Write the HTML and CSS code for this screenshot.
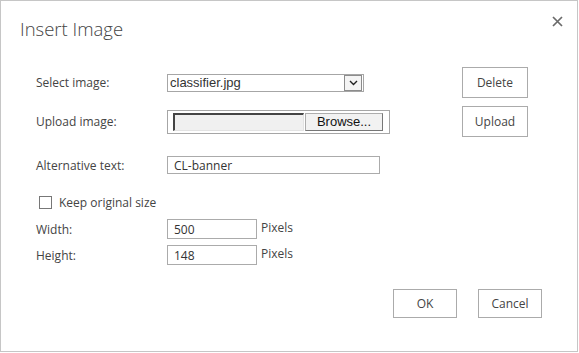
FILE: index.html
```html
<!DOCTYPE html>
<html lang="en">
<head>
  <meta charset="UTF-8">
  <title>Insert Image</title>
  <link rel="stylesheet" href="styles.css">
</head>
<body>
  <div class="dialog">
    <h1 class="dialog-title">Insert Image</h1>
    <button class="close-btn" title="Close">
      <svg width="11" height="11" viewBox="0 0 11 11"><path d="M1 1L10 10M10 1L1 10" stroke="#6a6a6a" stroke-width="1.7"/></svg>
    </button>

    <form class="image-form">
      <div class="row row-tall">
        <label for="image-select">Select image:</label>
        <div class="select-box">
          <select id="image-select">
            <option>classifier.jpg</option>
          </select>
          <span class="select-arrow">
            <svg width="9" height="6" viewBox="0 0 9 6"><path d="M1 1L4.5 4.5L8 1" stroke="#222" stroke-width="1.4" fill="none"/></svg>
          </span>
        </div>
        <button type="button" class="btn">Delete</button>
      </div>

      <div class="row row-tall">
        <label for="image-file">Upload image:</label>
        <div class="file-box">
          <span class="file-name"></span>
          <span class="file-browse">Browse...</span>
        </div>
        <button type="button" class="btn">Upload</button>
      </div>

      <div class="row row-alt">
        <label for="alt-text">Alternative text:</label>
        <input type="text" id="alt-text" class="text-input wide" value="CL-banner">
      </div>

      <div class="check-row">
        <input type="checkbox" id="keep-size">
        <label for="keep-size">Keep original size</label>
      </div>

      <div class="row row-size">
        <label for="width">Width:</label>
        <div class="size-field">
          <input type="text" id="width" class="text-input num" value="500">
          <span>Pixels</span>
        </div>
      </div>

      <div class="row row-size second">
        <label for="height">Height:</label>
        <div class="size-field">
          <input type="text" id="height" class="text-input num" value="148">
          <span>Pixels</span>
        </div>
      </div>

      <div class="dialog-actions">
        <button type="button" class="btn">OK</button>
        <button type="button" class="btn">Cancel</button>
      </div>
    </form>
  </div>
</body>
</html>
```

FILE: styles.css
```css
body {
  margin: 0;
  background-color: #fff;
  font-family: "Open Sans", "Noto Sans", sans-serif;
  color: #444;
}
.dialog {
  position: relative;
  box-sizing: border-box;
  width: 578px;
  height: 352px;
  border: 1px solid #c6c6c6;
  background-color: #fff;
}
.dialog-title {
  margin: 0;
  padding: 15px 0 0 19px;
  height: 52px;
  box-sizing: border-box;
  font-size: 18.5px;
  font-weight: 300;
  line-height: 26px;
  color: #444;
}
.close-btn {
  position: absolute;
  top: 15px;
  right: 14px;
  padding: 0;
  border: none;
  background: none;
  line-height: 0;
  cursor: pointer;
}
.image-form {
  padding: 14px 35px 0 35px;
  font-size: 12px;
}
.row {
  display: grid;
  grid-template-columns: 131px 295px 66px;
  align-items: center;
}
.row label {
  color: #444;
}
.row-tall {
  height: 31px;
  margin-bottom: 8px;
}
.row-alt {
  height: 18px;
  margin-top: 19px;
}
.select-box {
  display: flex;
  align-items: center;
  width: 197px;
  height: 18px;
  box-sizing: border-box;
  border: 1px solid #a6a6a6;
}
.select-box select {
  flex: 1;
  height: 16px;
  padding: 0 0 0 2px;
  border: none;
  outline: none;
  appearance: none;
  background: transparent;
  font-family: "Liberation Sans", Arial, sans-serif;
  font-size: 13px;
  color: #333;
}
.select-arrow {
  display: flex;
  align-items: center;
  justify-content: center;
  width: 16px;
  height: 14px;
  margin-right: 1px;
  border: 1px solid #8c8c8c;
  background-color: #f4f4f4;
}
.file-box {
  display: flex;
  align-items: center;
  width: 223px;
  height: 24px;
  box-sizing: border-box;
  padding: 0 5px;
  border: 1px solid #a6a6a6;
}
.file-name {
  width: 131px;
  height: 18px;
  box-sizing: border-box;
  border: 1px solid #e3e3e3;
  border-top: 2px solid #444;
  border-left: 2px solid #444;
  background-color: #f0f0f0;
}
.file-browse {
  width: 78px;
  height: 18px;
  box-sizing: border-box;
  margin-left: 1px;
  border: 1px solid #adadad;
  border-right-color: #777;
  border-bottom-color: #777;
  background-color: #f2f2f2;
  font-family: "Liberation Sans", Arial, sans-serif;
  font-size: 13px;
  line-height: 16px;
  text-align: center;
  color: #111;
}
.text-input {
  box-sizing: border-box;
  height: 18px;
  padding: 0 0 0 6px;
  border: 1px solid #ababab;
  font-family: "Open Sans", "Noto Sans", sans-serif;
  font-size: 12px;
  color: #333;
  outline: none;
}
.text-input.wide {
  width: 213px;
}
.check-row {
  display: flex;
  align-items: center;
  height: 18px;
  margin-top: 19px;
  padding-left: 3px;
}
.check-row input {
  appearance: none;
  width: 13px;
  height: 13px;
  margin: 0 7px 0 0;
  border: 1px solid #777;
  background-color: #fff;
}
.row-size {
  height: 20px;
  margin-top: 8px;
}
.row-size.second {
  margin-top: 6px;
}
.size-field {
  display: flex;
  align-items: center;
  gap: 4px;
}
.size-field span {
  position: relative;
  top: -2px;
}
.text-input.num {
  width: 90px;
  height: 20px;
}
.dialog-actions {
  display: flex;
  justify-content: flex-end;
  gap: 21px;
  margin-top: 24px;
}
.btn {
  box-sizing: border-box;
  min-width: 66px;
  height: 31px;
  padding: 0 10px;
  border: 1px solid #ababab;
  background-color: #fff;
  font-family: "Open Sans", "Noto Sans", sans-serif;
  font-size: 12px;
  color: #444;
  cursor: pointer;
}
.dialog-actions .btn {
  min-width: 64px;
  height: 29px;
}
```
